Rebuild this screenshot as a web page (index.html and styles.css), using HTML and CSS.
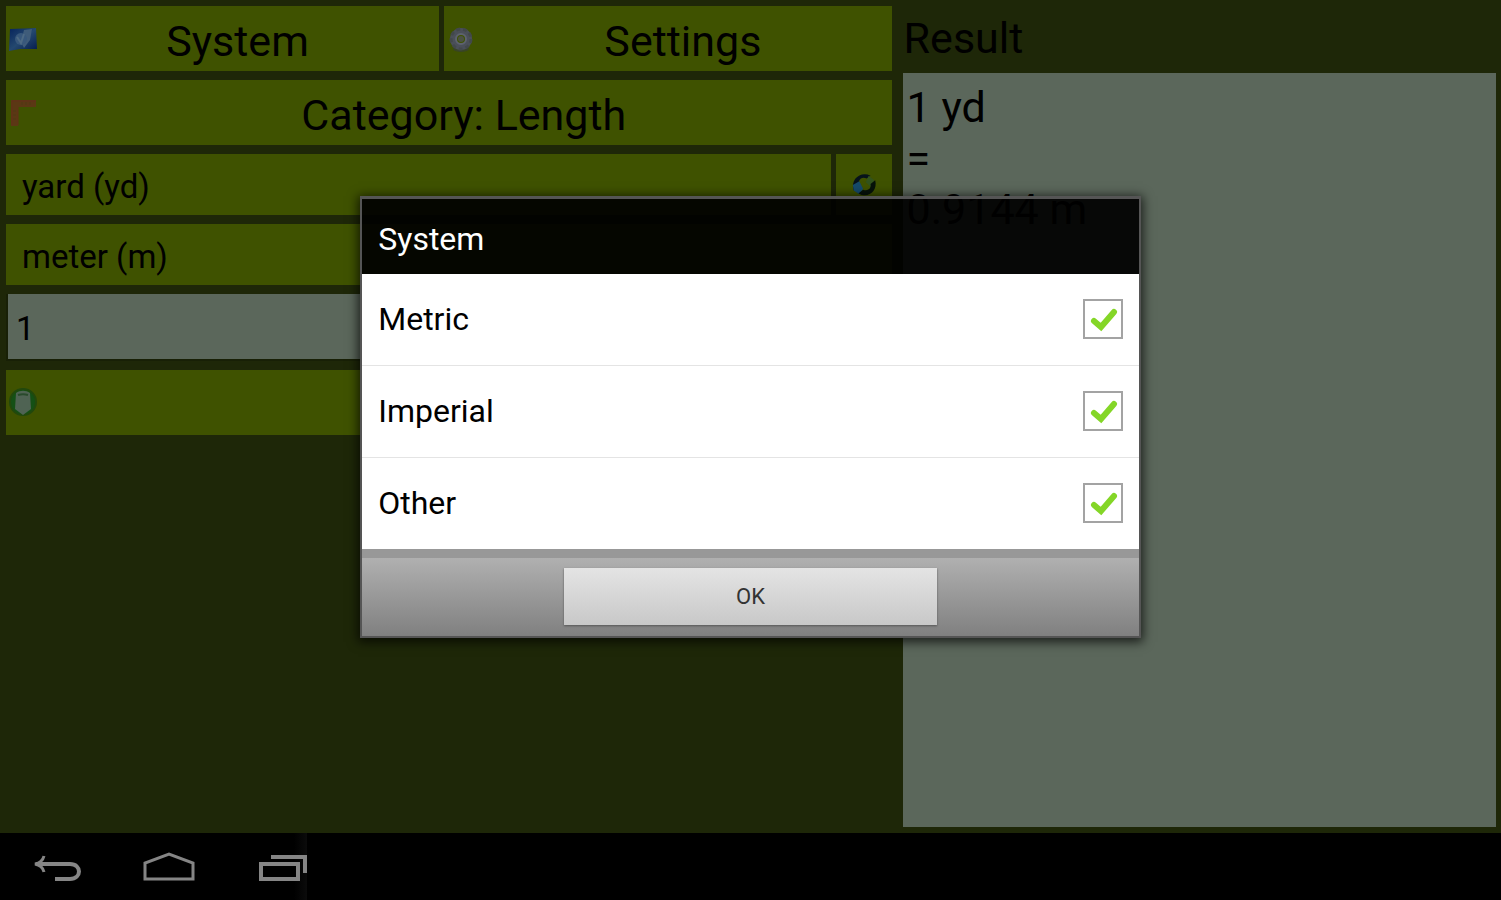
FILE: index.html
```html
<!DOCTYPE html>
<html lang="en">
<head>
  <meta charset="UTF-8">
  <meta name="viewport" content="width=device-width, initial-scale=1.0">
  <title>Unit Converter</title>
  <link rel="stylesheet" href="styles.css">
</head>
<body>

  <main class="converter">
    <section class="controls">
      <div class="row">
        <button class="btn" type="button">
          <svg class="btn-icon" viewBox="0 0 30 30" aria-hidden="true">
            <defs>
              <linearGradient id="flag" x1="0" y1="0" x2="1" y2="1">
                <stop offset="0" stop-color="#06245c"/>
                <stop offset=".5" stop-color="#24486f"/>
                <stop offset="1" stop-color="#031a4c"/>
              </linearGradient>
            </defs>
            <path d="M2 5l26-1 1 21-17 0-11 2z" fill="url(#flag)"/>
            <path d="M16 6l8-1-2 11-6 8-3-6z" fill="#3f5c7a"/>
            <circle cx="13" cy="15" r="6" fill="#38587c"/>
            <path d="M9 13l4 6 3-9" fill="none" stroke="#4d6a84" stroke-width="2"/>
          </svg>
          <span class="btn-text">System</span>
        </button>
        <button class="btn" type="button">
          <svg class="btn-icon" viewBox="0 0 30 30" aria-hidden="true">
            <ellipse cx="15" cy="25" rx="8" ry="3" fill="#394524"/>
            <circle cx="15" cy="15" r="8" fill="none" stroke="#4a4f58" stroke-width="6"/>
            <circle cx="15" cy="15" r="10" fill="none" stroke="#42484a" stroke-width="3" stroke-dasharray="4 3"/>
            <circle cx="15" cy="15" r="5" fill="none" stroke="#5d626e" stroke-width="2"/>
            <circle cx="15" cy="15" r="3" fill="#4c5244"/>
          </svg>
          <span class="btn-text">Settings</span>
        </button>
      </div>

      <button class="btn" type="button">
        <svg class="btn-icon" viewBox="0 0 30 30" aria-hidden="true">
          <path d="M3 2h25v7H10v19H3z" fill="#5b3814"/>
          <path d="M4 3h24M4 3v24M10 9v18" fill="none" stroke="#652f18" stroke-width="1"/>
          <path d="M14 4v3M18 4v3M22 4v3M5 13h3M5 17h3M5 21h3" stroke="#4f3a12" stroke-width="1"/>
        </svg>
        <span class="btn-text">Category: Length</span>
      </button>

      <div class="row">
        <select class="unit" aria-label="From unit">
          <option>yard (yd)</option>
          <option>meter (m)</option>
        </select>
        <button class="btn btn-swap" type="button" aria-label="Swap units">
          <svg class="swap-icon" viewBox="0 0 30 30" aria-hidden="true">
            <path d="M4 21C0 8 12 0 22 5l-4 3C11 5 8 11 10 17z" fill="#06121b"/>
            <path d="M3 15l7-4 4 8-4 6-6-4z" fill="#164a6b"/>
            <path d="M20 5l6 5-4 7-5-5z" fill="#32531d"/>
            <path d="M27 10c3 12-8 20-18 14l5-4c6 2 9-2 8-6z" fill="#06120a"/>
          </svg>
        </button>
      </div>

      <select class="unit" aria-label="To unit">
        <option>meter (m)</option>
        <option>yard (yd)</option>
      </select>

      <input class="amount" type="text" value="1" aria-label="Amount">

      <button class="btn" type="button" aria-label="Clear">
        <svg class="btn-icon" viewBox="0 0 30 30" aria-hidden="true">
          <circle cx="15" cy="14" r="13" fill="#145015" stroke="#22480c" stroke-width="2"/>
          <path d="M8 5c4-3 10-3 14 0l1 16-8 6-8-6z" fill="#4f6353"/>
          <path d="M10 7c3-1 7-1 10 0" fill="none" stroke="#294a2c" stroke-width="2"/>
        </svg>
      </button>
    </section>

    <section class="result">
      <label class="result-title" for="result">Result</label>
      <output class="result-box" id="result">1 yd<br>=<br>0.9144 m</output>
    </section>

    <div class="overlay">
      <form class="dialog" role="dialog" aria-labelledby="dialog-title">
        <h2 class="dialog-title" id="dialog-title">System</h2>
        <ul class="dialog-list">
          <li>
            <label class="option">
              <span>Metric</span>
              <span class="check">
                <input type="checkbox" checked>
                <svg viewBox="0 0 40 40" aria-hidden="true"><path d="M11 22l7 6 13-15"/></svg>
              </span>
            </label>
          </li>
          <li>
            <label class="option">
              <span>Imperial</span>
              <span class="check">
                <input type="checkbox" checked>
                <svg viewBox="0 0 40 40" aria-hidden="true"><path d="M11 22l7 6 13-15"/></svg>
              </span>
            </label>
          </li>
          <li>
            <label class="option">
              <span>Other</span>
              <span class="check">
                <input type="checkbox" checked>
                <svg viewBox="0 0 40 40" aria-hidden="true"><path d="M11 22l7 6 13-15"/></svg>
              </span>
            </label>
          </li>
        </ul>
        <div class="dialog-footer">
          <button class="ok" type="button">OK</button>
        </div>
      </form>
    </div>
  </main>

  <nav class="navbar">
    <button type="button" aria-label="Back">
      <svg viewBox="0 0 52 36" aria-hidden="true">
        <path d="M5 13h34c12 0 12 15 0 15H24" stroke-width="4"/>
        <path d="M13 5c-1 4-4 7-9 8 5 1 8 4 9 8" stroke-width="3"/>
      </svg>
    </button>
    <button type="button" aria-label="Home">
      <svg viewBox="0 0 52 36" aria-hidden="true">
        <path d="M2 28V12L26 3l24 9v16z" stroke-width="3"/>
      </svg>
    </button>
    <button class="recent" type="button" aria-label="Recent apps">
      <svg viewBox="0 0 52 36" aria-hidden="true">
        <path d="M6 13h37v15H6z" stroke-width="4"/>
        <path d="M16 6h34v16" stroke-width="4"/>
      </svg>
    </button>
  </nav>

</body>
</html>
```

FILE: styles.css
```css
* {
  box-sizing: border-box;
}

body {
  margin: 0;
  min-height: 100vh;
  display: flex;
  flex-direction: column;
  background: #000;
  color: #000;
  font-family: Roboto, "Noto Sans", sans-serif;
}

button, input, select {
  margin: 0;
  border: 0;
  border-radius: 0;
  font: inherit;
  color: inherit;
}

.converter {
  position: relative;
  flex: 1;
  display: grid;
  grid-template-columns: 3fr 2fr;
  background: #1e2708;
}

/* left side */
.controls {
  display: flex;
  flex-direction: column;
  gap: 9px;
  padding: 6px 9px 6px 6px;
}

.row {
  display: flex;
  gap: 5px;
}

.btn {
  flex: 1 1 auto;
  display: flex;
  align-items: center;
  height: 65px;
  padding: 0 2px;
  background: #3f5200;
  font-size: 43px;
}

.controls > .btn {
  flex: none;
}

.btn-icon {
  flex: none;
  width: 30px;
  height: 30px;
}

.btn-text {
  flex: 1;
  padding-top: 4px;
  text-align: center;
}

.unit {
  flex: 1;
  width: 100%;
  height: 61px;
  padding: 4px 16px 0;
  background: #3f5200;
  font-size: 33px;
  appearance: none;
}

.controls > .unit {
  flex: none;
}

.btn-swap {
  flex: none;
  justify-content: center;
  width: 56px;
  height: 61px;
}

.swap-icon {
  width: 28px;
  height: 28px;
}

.amount {
  width: 100%;
  height: 67px;
  padding: 4px 8px 0;
  border: 2px solid #182006;
  border-top: 0;
  background: #5b675b;
  font-size: 33px;
}

/* right side */
.result {
  display: flex;
  flex-direction: column;
  padding: 6px 5px 6px 2px;
}

.result-title {
  height: 67px;
  padding-left: 1px;
  font-size: 43px;
  line-height: 65px;
}

.result-box {
  flex: 1;
  padding: 9px 4px;
  background: #5b675b;
  font-size: 43px;
  line-height: 51px;
}

/* dialog */
.overlay {
  position: absolute;
  inset: 0;
  display: flex;
  align-items: center;
  justify-content: center;
}

.dialog {
  width: 52%;
  border: 2px solid #555;
  border-top-width: 3px;
  box-shadow: 0 2px 10px 2px rgba(0, 0, 0, .7);
}

.dialog-title {
  margin: 0;
  padding: 5px 16px 0;
  background: rgba(0, 0, 0, .92);
  color: #fff;
  font-size: 32px;
  font-weight: 400;
  line-height: 70px;
}

.dialog-list {
  margin: 0;
  padding: 0;
  list-style: none;
  background: #fff;
}

.dialog-list li + li {
  border-top: 1px solid #e4e4e4;
}

.option {
  display: flex;
  align-items: center;
  justify-content: space-between;
  height: 91px;
  padding: 0 16px;
  font-size: 32px;
}

.check {
  display: grid;
}

.check input,
.check svg {
  grid-area: 1 / 1;
  width: 40px;
  height: 40px;
}

.check input {
  border: 2px solid #a3a3a3;
  background: #fff;
  appearance: none;
}

.check svg {
  fill: none;
  stroke: #84d627;
  stroke-width: 6;
  stroke-linecap: round;
  pointer-events: none;
}

.check input:not(:checked) + svg {
  visibility: hidden;
}

.dialog-footer {
  display: flex;
  justify-content: center;
  padding: 10px 0 11px;
  border-top: 9px solid #989898;
  background: linear-gradient(#b0b0b0, #808080);
}

.ok {
  width: 48%;
  height: 57px;
  background: linear-gradient(#e4e4e4, #c8c8c8);
  box-shadow: 0 1px 2px #555;
  color: #333;
  font-size: 22px;
}

/* system bar */
.navbar {
  display: flex;
  gap: 60px;
  height: 67px;
  padding-left: 31px;
}

.navbar button {
  padding: 4px 0 0;
  background: none;
}

.navbar svg {
  display: block;
  width: 52px;
  height: 36px;
  fill: none;
  stroke: #858585;
}

.navbar .recent {
  background: linear-gradient(to right, #000 75%, #0b0b0b);
}
```
